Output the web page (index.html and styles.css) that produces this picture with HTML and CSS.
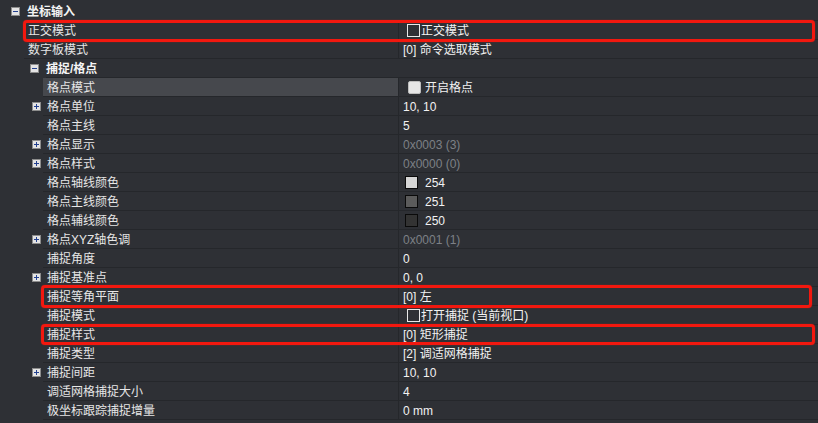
FILE: index.html
```html
<!DOCTYPE html>
<html lang="zh">
<head>
<meta charset="utf-8">
<link rel="stylesheet" href="styles.css">
</head>
<body>
<div class="grid">
  <div class="hdr l1">
    <span class="gut"><svg class="exp" width="9" height="9" viewBox="0 0 9 9"><rect x="0.5" y="0.5" width="8" height="8" fill="#e4e4e4" stroke="#8c8c8c"/><path d="M2 4.5h5" stroke="#23408f" stroke-width="1"/></svg></span>
    <span class="hdr-t">坐标输入</span>
  </div>

  <div class="row l2 hl hl-a">
    <span class="gut"></span>
    <span class="name">正交模式</span>
    <span class="val"><span class="cb"></span>正交模式</span>
  </div>
  <div class="row l2">
    <span class="gut"></span>
    <span class="name">数字板模式</span>
    <span class="val">[0] 命令选取模式</span>
  </div>

  <div class="hdr l2h">
    <span class="gut"><svg class="exp" width="9" height="9" viewBox="0 0 9 9"><rect x="0.5" y="0.5" width="8" height="8" fill="#e4e4e4" stroke="#8c8c8c"/><path d="M2 4.5h5" stroke="#23408f" stroke-width="1"/></svg></span>
    <span class="hdr-t">捕捉/格点</span>
  </div>

  <div class="row l3 sel">
    <span class="gut"></span>
    <span class="name">格点模式</span>
    <span class="val"><span class="cbf"></span>开启格点</span>
  </div>
  <div class="row l3">
    <span class="gut"><svg class="exp" width="9" height="9" viewBox="0 0 9 9"><rect x="0.5" y="0.5" width="8" height="8" fill="#e4e4e4" stroke="#8c8c8c"/><path d="M2 4.5h5M4.5 2v5" stroke="#23408f" stroke-width="1"/></svg></span>
    <span class="name">格点单位</span>
    <span class="val">10, 10</span>
  </div>
  <div class="row l3">
    <span class="gut"></span>
    <span class="name">格点主线</span>
    <span class="val">5</span>
  </div>
  <div class="row l3">
    <span class="gut"><svg class="exp" width="9" height="9" viewBox="0 0 9 9"><rect x="0.5" y="0.5" width="8" height="8" fill="#e4e4e4" stroke="#8c8c8c"/><path d="M2 4.5h5M4.5 2v5" stroke="#23408f" stroke-width="1"/></svg></span>
    <span class="name">格点显示</span>
    <span class="val dis">0x0003 (3)</span>
  </div>
  <div class="row l3">
    <span class="gut"><svg class="exp" width="9" height="9" viewBox="0 0 9 9"><rect x="0.5" y="0.5" width="8" height="8" fill="#e4e4e4" stroke="#8c8c8c"/><path d="M2 4.5h5M4.5 2v5" stroke="#23408f" stroke-width="1"/></svg></span>
    <span class="name">格点样式</span>
    <span class="val dis">0x0000 (0)</span>
  </div>
  <div class="row l3">
    <span class="gut"></span>
    <span class="name">格点轴线颜色</span>
    <span class="val"><span class="sw c254"></span>254</span>
  </div>
  <div class="row l3">
    <span class="gut"></span>
    <span class="name">格点主线颜色</span>
    <span class="val"><span class="sw c251"></span>251</span>
  </div>
  <div class="row l3">
    <span class="gut"></span>
    <span class="name">格点辅线颜色</span>
    <span class="val"><span class="sw c250"></span>250</span>
  </div>
  <div class="row l3">
    <span class="gut"><svg class="exp" width="9" height="9" viewBox="0 0 9 9"><rect x="0.5" y="0.5" width="8" height="8" fill="#e4e4e4" stroke="#8c8c8c"/><path d="M2 4.5h5M4.5 2v5" stroke="#23408f" stroke-width="1"/></svg></span>
    <span class="name">格点XYZ轴色调</span>
    <span class="val dis">0x0001 (1)</span>
  </div>
  <div class="row l3">
    <span class="gut"></span>
    <span class="name">捕捉角度</span>
    <span class="val">0</span>
  </div>
  <div class="row l3">
    <span class="gut"><svg class="exp" width="9" height="9" viewBox="0 0 9 9"><rect x="0.5" y="0.5" width="8" height="8" fill="#e4e4e4" stroke="#8c8c8c"/><path d="M2 4.5h5M4.5 2v5" stroke="#23408f" stroke-width="1"/></svg></span>
    <span class="name">捕捉基准点</span>
    <span class="val">0, 0</span>
  </div>
  <div class="row l3 hl hl-b">
    <span class="gut"></span>
    <span class="name">捕捉等角平面</span>
    <span class="val">[0] 左</span>
  </div>
  <div class="row l3">
    <span class="gut"></span>
    <span class="name">捕捉模式</span>
    <span class="val"><span class="cb"></span>打开捕捉 (当前视口)</span>
  </div>
  <div class="row l3 hl hl-c">
    <span class="gut"></span>
    <span class="name">捕捉样式</span>
    <span class="val">[0] 矩形捕捉</span>
  </div>
  <div class="row l3">
    <span class="gut"></span>
    <span class="name">捕捉类型</span>
    <span class="val">[2] 调适网格捕捉</span>
  </div>
  <div class="row l3">
    <span class="gut"><svg class="exp" width="9" height="9" viewBox="0 0 9 9"><rect x="0.5" y="0.5" width="8" height="8" fill="#e4e4e4" stroke="#8c8c8c"/><path d="M2 4.5h5M4.5 2v5" stroke="#23408f" stroke-width="1"/></svg></span>
    <span class="name">捕捉间距</span>
    <span class="val">10, 10</span>
  </div>
  <div class="row l3">
    <span class="gut"></span>
    <span class="name">调适网格捕捉大小</span>
    <span class="val">4</span>
  </div>
  <div class="row l3">
    <span class="gut"></span>
    <span class="name">极坐标跟踪捕捉增量</span>
    <span class="val">0 mm</span>
  </div>
</div>
</body>
</html>
```

FILE: styles.css
```css
html, body {
  margin: 0;
  padding: 0;
  background: #2e3035;
  width: 818px;
  height: 423px;
  overflow: hidden;
}

.grid {
  padding-top: 2px;
  font-family: "Liberation Sans", "Noto Sans CJK SC", sans-serif;
  font-size: 12px;
  color: #e9e9e9;
}

.row, .hdr {
  display: flex;
  height: 19px;
  white-space: nowrap;
}

.gut {
  flex: none;
  display: flex;
  align-items: center;
  height: 19px;
}

.exp { display: block; }

.l1 .gut { width: 27px; }
.l1 .exp { margin-left: 11px; margin-bottom: 1px; }

.l2 .gut { width: 24px; }

.l2h .gut { width: 46px; padding-left: 24px; box-sizing: border-box; }
.l2h .exp { margin-left: 6px; margin-bottom: 1px; }

.l3 .gut { width: 43px; }
.l3 .exp { margin-left: 32px; margin-bottom: 1px; }

.hdr-t, .name {
  box-sizing: border-box;
  height: 19px;
  padding-top: 2px;
  line-height: 16px;
  border-bottom: 1px solid #25272b;
}

.hdr-t {
  flex: 1;
  font-weight: bold;
  color: #f4f4f4;
}

.name {
  flex: 1;
  padding-left: 4px;
  border-right: 1px solid #25272b;
  color: #e6e6e6;
}

.val {
  flex: none;
  box-sizing: border-box;
  width: 419px;
  height: 19px;
  padding: 2px 0 0 4px;
  line-height: 16px;
  border-bottom: 1px solid #25272b;
  display: flex;
  align-items: center;
  color: #f2f2f2;
}

.val.dis { color: #7d8086; }

.sel .name { background: #46484d; }

.cb {
  width: 11px;
  height: 11px;
  border: 1px solid #e8e8e8;
  margin: 0 1px 2px 4px;
  flex: none;
}

.cbf {
  width: 11px;
  height: 11px;
  border-radius: 2px;
  background: #e6e6e6;
  border: 1px solid #bdbdbd;
  margin: 0 4px 2px 5px;
  flex: none;
}

.sw {
  width: 11px;
  height: 11px;
  border: 1px solid #0a0a0a;
  margin: 0 7px 2px 2px;
  flex: none;
}
.c254 { background: #d6d6d6; }
.c251 { background: #5b5b5b; }
.c250 { background: #333333; }

.hl { position: relative; }
.hl::after {
  content: "";
  position: absolute;
  border: 3px solid #f2180f;
  border-radius: 4px;
  box-shadow: 0 0 1px #f2180f;
  pointer-events: none;
}
.hl-a::after { top: -1px; bottom: -2px; left: 23px; right: 3px; }
.hl-b::after { top: -2px; bottom: -2px; left: 41px; right: 6px; }
.hl-c::after { top: -1px; bottom: -1px; left: 41px; right: 3px; }
```
